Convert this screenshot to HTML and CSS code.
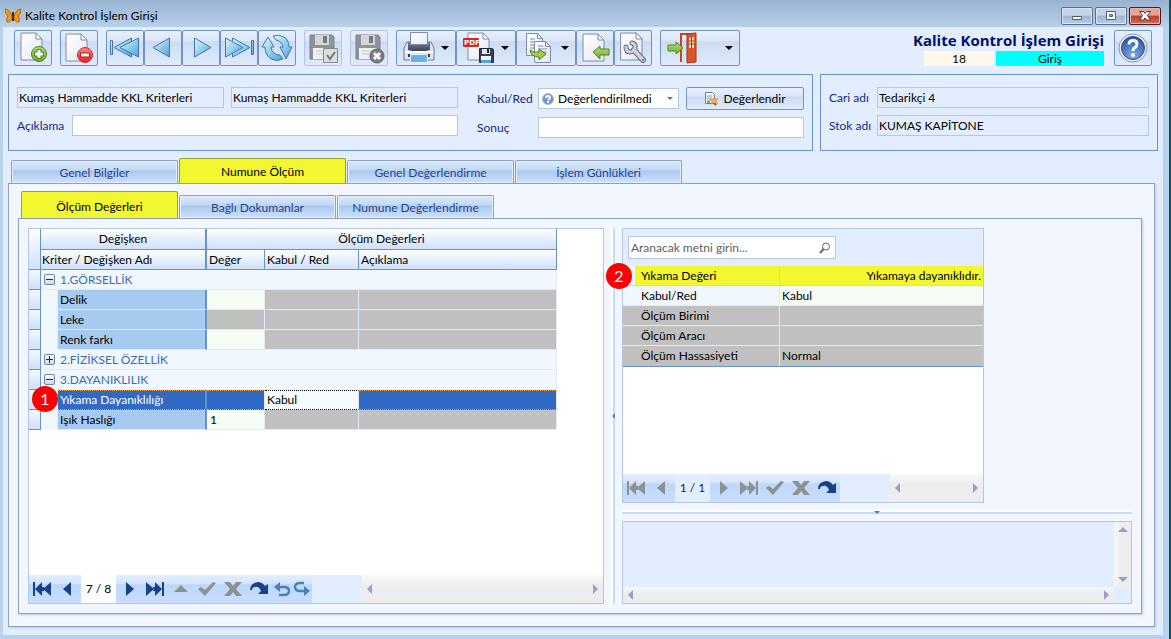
FILE: index.html
```html
<!DOCTYPE html>
<html lang="tr">
<head>
    <meta charset="UTF-8">
    <title>Kalite Kontrol İşlem Girişi</title>
    <meta name="viewport" content="width=device-width, initial-scale=1.0">
    <link rel="stylesheet" href="styles.css">
</head>
<body>

<!-- shared icon shapes -->
<svg class="defs" aria-hidden="true">
    <defs>
        <linearGradient id="blue" x1="0" y1="0" x2="1" y2="1">
            <stop offset="0" stop-color="#e4f8ff"/><stop offset="1" stop-color="#4ba3dc"/>
        </linearGradient>
        <linearGradient id="paper" x1="0" y1="0" x2="1" y2="1">
            <stop offset="0" stop-color="#ffffff"/><stop offset="1" stop-color="#e6e9f3"/>
        </linearGradient>
        <linearGradient id="green" x1="0" y1="0" x2="0" y2="1">
            <stop offset="0" stop-color="#b9e27a"/><stop offset="1" stop-color="#6fae2a"/>
        </linearGradient>
        <linearGradient id="dark" x1="0" y1="0" x2="0" y2="1">
            <stop offset="0" stop-color="#7c8599"/><stop offset="1" stop-color="#343b50"/>
        </linearGradient>
        <linearGradient id="red" x1="0" y1="0" x2="0" y2="1">
            <stop offset="0" stop-color="#ff8c84"/><stop offset="1" stop-color="#e8191f"/>
        </linearGradient>
        <radialGradient id="help" cx=".5" cy=".85" r=".8">
            <stop offset="0" stop-color="#7fb0e8"/><stop offset="1" stop-color="#2d55a8"/>
        </radialGradient>
        <symbol id="page" viewBox="0 0 24 30">
            <path d="M1 1h15l6 6v21H1z" fill="url(#paper)" stroke="#7f8aae"/>
            <path d="M16 1v6h6z" fill="#fff" stroke="#7f8aae" stroke-linejoin="round"/>
        </symbol>
        <symbol id="floppy" viewBox="0 0 26 26">
            <path d="M1 1h22l2 2v22H1z" fill="#8f9298" stroke="#7c7f85"/>
            <path d="M6 1h14v10H6z" fill="#d4d6da"/>
            <path d="M14 2h4v7h-4z" fill="#777a80"/>
            <path d="M4 14h18v11H4z" fill="#eff0f2"/>
            <path d="M7 17h12M7 20h12" stroke="#c5c7cb"/>
        </symbol>
        <symbol id="nav-first" viewBox="0 0 20 16">
            <path d="M1 1h2v14H1zM3 8l7-7v14zM11 8l8-7v14zM10 6h2v4h-2z" fill="currentColor"/>
        </symbol>
        <symbol id="nav-prev" viewBox="0 0 20 16"><path d="M5 8l8-7v14z" fill="currentColor"/></symbol>
        <symbol id="nav-next" viewBox="0 0 20 16"><path d="M15 8L7 1v14z" fill="currentColor"/></symbol>
        <symbol id="nav-last" viewBox="0 0 20 16">
            <path d="M17 1h2v14h-2zM17 8l-7-7v14zM9 8L1 1v14zM8 6h2v4H8z" fill="currentColor"/>
        </symbol>
        <symbol id="nav-edit" viewBox="0 0 20 16"><path d="M3 11l7-7 7 7z" fill="currentColor"/></symbol>
        <symbol id="nav-post" viewBox="0 0 20 16"><path d="M1 8l3-2 4 3 8-8 3 1L8 15z" fill="currentColor"/></symbol>
        <symbol id="nav-cancel" viewBox="0 0 20 16"><path d="M1 1h6l3 4 3-4h6l-6 7 6 7h-6l-3-4-3 4H1l6-7z" fill="currentColor"/></symbol>
        <symbol id="nav-refresh" viewBox="0 0 20 16">
            <path d="M1 9q0-7 8-8 4 0 7 4l3-2v10H9l3-3q-2-5-6-4-3 0-3 3z" fill="currentColor"/>
        </symbol>
        <symbol id="nav-undo" viewBox="0 0 18 16">
            <path d="M3 6h8q5 0 5 4t-5 4H6" fill="none" stroke="currentColor" stroke-width="2.4"/>
            <path d="M1 6l6-5v10z" fill="currentColor"/>
        </symbol>
        <symbol id="nav-redo" viewBox="0 0 18 16">
            <path d="M11 2H7Q2 2 2 6t5 4h8" fill="none" stroke="currentColor" stroke-width="2.4"/>
            <path d="M17 10l-6-5v10z" fill="currentColor"/>
        </symbol>
    </defs>
</svg>

<div class="window">
    <header class="titlebar">
        <svg class="logo" viewBox="0 0 16 16" aria-hidden="true">
            <path d="M7 8Q4 1 0 1q0 5 3 7-2 2-1 6 3 1 5-3z" fill="#f39a1d" stroke="#b8640c"/>
            <path d="M9 8q3-7 7-7 0 5-3 7 2 2 1 6-3 1-5-3z" fill="#f39a1d" stroke="#b8640c"/>
            <path d="M8 4v9" stroke="#4a2c0c" stroke-width="2"/>
        </svg>
        <span class="caption">Kalite Kontrol İşlem Girişi</span>
        <div class="window-buttons">
            <button class="wbtn" aria-label="Simge durumuna küçült">
                <svg viewBox="0 0 12 10"><path d="M1.500 5.500h9v3h-9z" fill="#fff" stroke="#515d75"/></svg>
            </button>
            <button class="wbtn" aria-label="Ekranı kapla">
                <svg viewBox="0 0 12 10"><path d="M1.500.5h9v8h-9z" fill="#fff" stroke="#515d75"/><path d="M4.500 3.500h3v2h-3z" fill="#9ab" stroke="#515d75"/></svg>
            </button>
            <button class="wbtn wbtn-close" aria-label="Kapat">
                <svg viewBox="0 0 12 10"><path d="M.5.5h4L6 2.500 7.500.5h4L8.500 4.500l3 4.500h-4L6 7 4.500 9h-4l3-4.500z" fill="#fff" stroke="#5a3038"/></svg>
            </button>
        </div>
    </header>

    <main class="client">
        <div class="toolbar">
            <button class="tool" aria-label="Yeni">
                <svg viewBox="0 0 32 32">
                    <use href="#page" x="3" y="0" width="24" height="30"/>
                    <circle cx="22" cy="22" r="7.500" fill="url(#green)" stroke="#4d7f1c"/>
                    <path d="M22 17v10M17 22h10" stroke="#4d7f1c" stroke-width="5"/>
                    <path d="M22 18v8M18 22h8" stroke="#fff" stroke-width="3"/>
                </svg>
            </button>
            <button class="tool" aria-label="Sil">
                <svg viewBox="0 0 32 32">
                    <use href="#page" x="2" y="1" width="24" height="30"/>
                    <circle cx="22" cy="23" r="7.500" fill="url(#red)" stroke="#c9302c"/>
                    <path d="M17 23h10" stroke="#b3191c" stroke-width="5"/>
                    <path d="M18 23h8" stroke="#fff" stroke-width="3"/>
                </svg>
            </button>
            <div class="tool-group">
                <button class="tool" aria-label="İlk kayıt">
                    <svg viewBox="0 0 32 32" fill="url(#blue)" stroke="#3b78b0" stroke-linejoin="round">
                        <path d="M1.500 8.500h2v14h-2zM5 15.500L22.500 6v19z"/><path d="M11 15.500L29.500 6v19z"/>
                    </svg>
                </button>
                <button class="tool" aria-label="Önceki kayıt">
                    <svg viewBox="0 0 32 32" fill="url(#blue)" stroke="#3b78b0" stroke-linejoin="round"><path d="M6 15.500L22.500 6v19z"/></svg>
                </button>
                <button class="tool" aria-label="Sonraki kayıt">
                    <svg viewBox="0 0 32 32" fill="url(#blue)" stroke="#3b78b0" stroke-linejoin="round"><path d="M26 15.500L9.500 6v19z"/></svg>
                </button>
                <button class="tool" aria-label="Son kayıt">
                    <svg viewBox="0 0 32 32" fill="url(#blue)" stroke="#3b78b0" stroke-linejoin="round">
                        <path d="M28.500 8.500h2v14h-2zM27 15.500L9.500 6v19z"/><path d="M20 15.500L2.500 6v19z"/>
                    </svg>
                </button>
                <button class="tool" aria-label="Yenile">
                    <svg viewBox="0 0 32 32" fill="url(#blue)" stroke="#3b78b0" stroke-linejoin="round">
                        <path d="M1 15L7 5l6 10h-3q1 8 9 8l3 4q-6 3-12 0-6-4-6-12z"/>
                        <path d="M31 15l-6 12-6-12h3q-1-6-7-7l-3-4q6-2 11 1 5 3 5 10z"/>
                    </svg>
                </button>
            </div>
            <button class="tool" disabled aria-label="Kaydet">
                <svg viewBox="0 0 32 32">
                    <use href="#floppy" x="2" y="2" width="26" height="26"/>
                    <path d="M16.500 16.500h14v14h-14z" fill="#dcdde0" stroke="#85888d"/>
                    <path d="M20 23l3 4 5-7" fill="none" stroke="#777" stroke-width="2"/>
                </svg>
            </button>
            <button class="tool" disabled aria-label="Vazgeç">
                <svg viewBox="0 0 32 32">
                    <use href="#floppy" x="2" y="2" width="26" height="26"/>
                    <circle cx="24" cy="24" r="7" fill="#7b7d82" stroke="#5e6065"/>
                    <path d="M21 21l6 6M27 21l-6 6" stroke="#fff" stroke-width="3"/>
                </svg>
            </button>
            <div class="tool-group">
                <button class="tool tool-split" aria-label="Yazdır">
                    <svg viewBox="0 0 32 32">
                        <path d="M4 10h24l3 6v12H1V16z" fill="#dfe3ee" stroke="#6f7a9a"/>
                        <path d="M5 10h22v8q-11 3-22 0z" fill="url(#dark)"/>
                        <path d="M7.500.5h17v12h-17z" fill="url(#paper)" stroke="#7f8aae"/>
                        <path d="M2 20h28" stroke="#fff" stroke-width="2"/>
                        <path d="M5 22h22v3H5z" fill="#343b50"/>
                        <path d="M7.500 22.500h17v8h-17z" fill="#65b2ea" stroke="#e9f4fc"/>
                    </svg>
                    <svg class="caret" viewBox="0 0 8 4"><path d="M0 0h8L4 4z"/></svg>
                </button>
                <button class="tool tool-split" aria-label="PDF kaydet">
                    <svg viewBox="0 0 32 32">
                        <use href="#page" x="4" y="0" width="24" height="30"/>
                        <rect x="0" y="6" width="16" height="9" rx="1" fill="#d42a22"/>
                        <text x="1" y="13" class="pdf-text">PDF</text>
                        <path d="M16.500 16.500h13l1 1v13h-14z" fill="#3a4358" stroke="#232a3d"/>
                        <path d="M19 17h8v5h-8z" fill="#e4e8f0"/><path d="M24 17h2v4h-2z" fill="#232a3d"/>
                        <path d="M18 24h10v7H18z" fill="#eef3f8"/><path d="M18 28h10v3H18z" fill="#52a4dd"/>
                    </svg>
                    <svg class="caret" viewBox="0 0 8 4"><path d="M0 0h8L4 4z"/></svg>
                </button>
                <button class="tool tool-split" aria-label="Kopyala">
                    <svg viewBox="0 0 32 32">
                        <path d="M3.500 1.500h11l5 5v17h-16z" fill="url(#paper)" stroke="#7f8aae"/>
                        <path d="M14.500 1.500v5h5M7 7h5M7 10h8M7 13h8M7 16h8" fill="none" stroke="#7f8aae"/>
                        <path d="M11.500 9.500h11l5 5v16h-16z" fill="url(#paper)" stroke="#7f8aae"/>
                        <path d="M22.500 9.500v5h5M15 14h5M15 17h9M15 20h9" fill="none" stroke="#7f8aae"/>
                        <path d="M7 18q3 3 9 2v-3l7 5-7 6v-3q-8 0-9-7z" fill="#9ccf45" stroke="#56801f"/>
                    </svg>
                    <svg class="caret" viewBox="0 0 8 4"><path d="M0 0h8L4 4z"/></svg>
                </button>
                <button class="tool" aria-label="İçe aktar">
                    <svg viewBox="0 0 32 32">
                        <use href="#page" x="3" y="1" width="24" height="30"/>
                        <path d="M14 20l7-6v3h9v6h-9v4z" fill="url(#green)" stroke="#56801f"/>
                    </svg>
                </button>
                <button class="tool" aria-label="Ayarlar">
                    <svg viewBox="0 0 32 32" fill="none" stroke-linecap="round">
                        <use href="#page" x="3" y="0" width="24" height="30"/>
                        <path d="M17 18l9 10" stroke="#666e85" stroke-width="6"/>
                        <path d="M9 15q0 5 4 5t5-4-3-5" stroke="#666e85" stroke-width="5"/>
                        <path d="M17 18l9 10" stroke="#ccd1dc" stroke-width="4"/>
                        <path d="M9 15q0 5 4 5t5-4-3-5" stroke="#ccd1dc" stroke-width="3"/>
                        <circle cx="26" cy="28" r="1" fill="#666e85"/>
                    </svg>
                </button>
            </div>
            <button class="tool tool-split tool-exit" aria-label="Çıkış">
                <svg viewBox="0 0 32 32">
                    <path d="M14 30V2h10" fill="none" stroke="#c9451e" stroke-width="2"/>
                    <path d="M20 2l9-1v29l-9 1z" fill="#d9562a" stroke="#a93713"/>
                    <path d="M22 6l5-1v11h-5z" fill="#f6e3c0"/>
                    <path d="M24.500 5v11M22 9h5M22 12h5" stroke="#a93713"/>
                    <path d="M1 13h8v-3l7 6-7 6v-3H1z" fill="url(#green)" stroke="#56801f"/>
                </svg>
                <svg class="caret" viewBox="0 0 8 4"><path d="M0 0h8L4 4z"/></svg>
            </button>

            <div class="form-title">
                <h1>Kalite Kontrol İşlem Girişi</h1>
                <div class="form-status">
                    <span class="record-no">18</span>
                    <span class="record-type">Giriş</span>
                </div>
            </div>
            <button class="tool" aria-label="Yardım">
                <svg viewBox="0 0 32 32">
                    <circle cx="16" cy="16" r="14" fill="#eef3fa" stroke="#8792ad"/>
                    <circle cx="16" cy="16" r="11.500" fill="url(#help)" stroke="#2b4a8c"/>
                    <path d="M12 12.500q0-4 4-4t4 3.500q0 2-2 3.500-2 1-2 3.500" fill="none" stroke="#fff" stroke-width="3"/>
                    <circle cx="16" cy="23" r="2" fill="#fff"/>
                </svg>
            </button>
        </div>

        <div class="panels">
            <section class="panel panel-main">
                <div class="criteria">
                    <div class="field-row">
                        <input class="field readonly criterion" type="text" aria-label="Kriter kodu" value="Kumaş Hammadde KKL Kriterleri" readonly>
                        <input class="field readonly" type="text" aria-label="Kriter adı" value="Kumaş Hammadde KKL Kriterleri" readonly>
                    </div>
                    <div class="field-row">
                        <label class="label-wide" for="aciklama">Açıklama</label>
                        <input class="field" type="text" id="aciklama">
                    </div>
                </div>
                <div class="result">
                    <div class="field-row">
                        <label class="label-result" for="kabul">Kabul/Red</label>
                        <div class="combo">
                            <svg class="combo-icon" viewBox="0 0 12 12">
                                <circle cx="6" cy="6" r="5.500" fill="#6f97cf" stroke="#a9b8cf"/>
                                <path d="M4 5q0-2 2-2t2 2L6 7M6 8v2" fill="none" stroke="#fff" stroke-width="2"/>
                            </svg>
                            <select id="kabul">
                                <option>Değerlendirilmedi</option>
                                <option>Kabul</option>
                                <option>Red</option>
                            </select>
                            <svg class="combo-caret" viewBox="0 0 6 3"><path d="M0 0h6L3 3z" fill="#5577aa"/></svg>
                        </div>
                        <button class="action">
                            <svg viewBox="0 0 14 14">
                                <path d="M1.500.5h7l2 2v9h-9z" fill="#fff" stroke="#6b7ba8"/>
                                <path d="M3 4h5M3 6h5M3 8h4" stroke="#8796bd"/>
                                <path d="M3 9h3v2H3z" fill="#74b43a"/>
                                <path d="M9 10l3 3" stroke="#555b70" stroke-width="2"/>
                                <path d="M10 5l1 2 3 0-2 2 1 3-3-1-3 1 1-3-2-2h3z" fill="#fbb52c" stroke="#c47a12" stroke-width=".5"/>
                            </svg>
                            Değerlendir
                        </button>
                    </div>
                    <div class="field-row">
                        <label class="label-result" for="sonuc">Sonuç</label>
                        <input class="field" type="text" id="sonuc">
                    </div>
                </div>
            </section>
            <section class="panel">
                <div class="field-row">
                    <label class="label-account" for="cari">Cari adı</label>
                    <input class="field readonly" type="text" id="cari" value="Tedarikçi 4" readonly>
                </div>
                <div class="field-row">
                    <label class="label-account" for="stok">Stok adı</label>
                    <input class="field readonly" type="text" id="stok" value="KUMAŞ KAPİTONE" readonly>
                </div>
            </section>
        </div>

        <nav class="tabs">
            <button class="tab">Genel Bilgiler</button>
            <button class="tab active">Numune Ölçüm</button>
            <button class="tab">Genel Değerlendirme</button>
            <button class="tab">İşlem Günlükleri</button>
        </nav>
        <div class="tab-page">
            <nav class="tabs subtabs">
                <button class="tab active">Ölçüm Değerleri</button>
                <button class="tab">Bağlı Dokumanlar</button>
                <button class="tab">Numune Değerlendirme</button>
            </nav>
            <div class="tab-page split">

                <section class="box measure">
                    <div class="box-body">
                        <table class="grid">
                            <colgroup>
                                <col class="c-gutter"><col class="c-tree"><col class="c-name">
                                <col class="c-value"><col class="c-accept"><col class="c-note">
                            </colgroup>
                            <thead>
                                <tr class="bands">
                                    <th class="gutter" rowspan="2"></th>
                                    <th class="band-end" colspan="2">Değişken</th>
                                    <th colspan="3">Ölçüm Değerleri</th>
                                </tr>
                                <tr class="heads">
                                    <th class="band-end" colspan="2">Kriter / Değişken Adı</th>
                                    <th>Değer</th>
                                    <th>Kabul / Red</th>
                                    <th>Açıklama</th>
                                </tr>
                            </thead>
                            <tbody>
                                <tr class="group">
                                    <td class="gutter"></td>
                                    <td colspan="5"><div class="group-cell"><button class="toggle" aria-label="Daralt"><svg viewBox="0 0 7 7"><path d="M0 3.500h7" stroke="#222c44"/></svg></button>1.GÖRSELLİK</div></td>
                                </tr>
                                <tr>
                                    <td class="gutter"></td><td class="tree"></td><td class="name">Delik</td>
                                    <td class="open"></td><td class="locked"></td><td class="locked"></td>
                                </tr>
                                <tr>
                                    <td class="gutter"></td><td class="tree"></td><td class="name">Leke</td>
                                    <td class="locked"></td><td class="locked"></td><td class="locked"></td>
                                </tr>
                                <tr>
                                    <td class="gutter"></td><td class="tree"></td><td class="name">Renk farkı</td>
                                    <td class="open"></td><td class="locked"></td><td class="locked"></td>
                                </tr>
                                <tr class="group">
                                    <td class="gutter"></td>
                                    <td colspan="5"><div class="group-cell"><button class="toggle" aria-label="Genişlet"><svg viewBox="0 0 7 7"><path d="M0 3.500h7M3.500 0v7" stroke="#222c44"/></svg></button>2.FİZİKSEL ÖZELLİK</div></td>
                                </tr>
                                <tr class="group">
                                    <td class="gutter"></td>
                                    <td colspan="5"><div class="group-cell"><button class="toggle" aria-label="Daralt"><svg viewBox="0 0 7 7"><path d="M0 3.500h7" stroke="#222c44"/></svg></button>3.DAYANIKLILIK</div></td>
                                </tr>
                                <tr class="selected">
                                    <td class="gutter"><span class="badge badge-row">1</span></td><td class="tree"></td><td class="name">Yıkama Dayanıklılığı</td>
                                    <td></td><td class="focused">Kabul</td><td></td>
                                </tr>
                                <tr>
                                    <td class="gutter"></td><td class="tree"></td><td class="name">Işık Haslığı</td>
                                    <td class="open">1</td><td class="locked"></td><td class="locked"></td>
                                </tr>
                            </tbody>
                        </table>
                    </div>
                    <div class="navigator">
                        <div class="nav-buttons">
                            <button aria-label="İlk"><svg><use href="#nav-first"/></svg></button>
                            <button aria-label="Önceki"><svg><use href="#nav-prev"/></svg></button>
                            <span class="nav-pos">7 / 8</span>
                            <button aria-label="Sonraki"><svg><use href="#nav-next"/></svg></button>
                            <button aria-label="Son"><svg><use href="#nav-last"/></svg></button>
                            <button aria-label="Düzenle" disabled><svg><use href="#nav-edit"/></svg></button>
                            <button aria-label="Onayla" disabled><svg><use href="#nav-post"/></svg></button>
                            <button aria-label="İptal" disabled><svg><use href="#nav-cancel"/></svg></button>
                            <button aria-label="Yenile"><svg><use href="#nav-refresh"/></svg></button>
                            <button class="nav-small" aria-label="Geri al"><svg><use href="#nav-undo"/></svg></button>
                            <button class="nav-small" aria-label="İleri al"><svg><use href="#nav-redo"/></svg></button>
                        </div>
                        <div class="hscroll">
                            <button aria-label="Sola kaydır"><svg viewBox="0 0 5 10"><path d="M5 0v10L0 5z"/></svg></button>
                            <button aria-label="Sağa kaydır"><svg viewBox="0 0 5 10"><path d="M0 0v10l5-5z"/></svg></button>
                        </div>
                    </div>
                </section>

                <div class="splitter vertical"><svg viewBox="0 0 3 6"><path d="M3 0v6L0 3z" fill="#4d7fc0"/></svg></div>

                <div class="details">
                    <section class="box properties">
                        <div class="search-bar">
                            <div class="search">
                                <input type="search" placeholder="Aranacak metni girin..." aria-label="Ara">
                                <svg viewBox="0 0 12 12"><circle cx="7" cy="4.500" r="3.500" fill="none" stroke="#666"/><path d="M4.500 7L1 11" stroke="#666" stroke-width="2"/></svg>
                            </div>
                        </div>
                        <div class="box-body">
                            <table class="props">
                                <tr class="marked"><th scope="row"><span class="badge badge-prop">2</span>Yıkama Değeri</th><td>Yıkamaya dayanıklıdır.</td></tr>
                                <tr class="editable"><th scope="row">Kabul/Red</th><td>Kabul</td></tr>
                                <tr><th scope="row">Ölçüm Birimi</th><td></td></tr>
                                <tr><th scope="row">Ölçüm Aracı</th><td></td></tr>
                                <tr><th scope="row">Ölçüm Hassasiyeti</th><td>Normal</td></tr>
                            </table>
                        </div>
                        <div class="navigator">
                            <div class="nav-buttons">
                                <button aria-label="İlk" disabled><svg><use href="#nav-first"/></svg></button>
                                <button aria-label="Önceki" disabled><svg><use href="#nav-prev"/></svg></button>
                                <span class="nav-pos nav-pos-plain">1 / 1</span>
                                <button aria-label="Sonraki" disabled><svg><use href="#nav-next"/></svg></button>
                                <button aria-label="Son" disabled><svg><use href="#nav-last"/></svg></button>
                                <button aria-label="Onayla" disabled><svg><use href="#nav-post"/></svg></button>
                                <button aria-label="İptal" disabled><svg><use href="#nav-cancel"/></svg></button>
                                <button aria-label="Yenile"><svg><use href="#nav-refresh"/></svg></button>
                            </div>
                            <div class="hscroll">
                                <button aria-label="Sola kaydır"><svg viewBox="0 0 5 10"><path d="M5 0v10L0 5z"/></svg></button>
                                <button aria-label="Sağa kaydır"><svg viewBox="0 0 5 10"><path d="M0 0v10l5-5z"/></svg></button>
                            </div>
                        </div>
                    </section>

                    <div class="splitter horizontal"><svg viewBox="0 0 6 3"><path d="M0 0h6L3 3z" fill="#4d7fc0"/></svg></div>

                    <section class="box memo">
                        <div class="memo-text"></div>
                        <div class="vscroll">
                            <button aria-label="Yukarı kaydır"><svg viewBox="0 0 10 5"><path d="M0 5h10L5 0z"/></svg></button>
                            <button aria-label="Aşağı kaydır"><svg viewBox="0 0 10 5"><path d="M0 0h10L5 5z"/></svg></button>
                        </div>
                        <div class="hscroll">
                            <button aria-label="Sola kaydır"><svg viewBox="0 0 5 10"><path d="M5 0v10L0 5z"/></svg></button>
                            <button aria-label="Sağa kaydır"><svg viewBox="0 0 5 10"><path d="M0 0v10l5-5z"/></svg></button>
                        </div>
                    </section>
                </div>
            </div>
        </div>
    </main>
</div>

</body>
</html>
```
FILE: styles.css
```css
* {
    box-sizing: border-box;
}

body {
    margin: 0;
    font-family: Lato, "Open Sans", sans-serif;
    font-size: 12px;
    line-height: 16px;
    color: #000;
}

button, input, select {
    font: inherit;
    color: inherit;
    margin: 0;
}

button {
    padding: 0;
}

svg {
    display: block;
    flex: none;
}

.defs {
    position: absolute;
    width: 0;
    height: 0;
}

/* window frame */
.window {
    display: flex;
    flex-direction: column;
    min-height: 100vh;
    padding: 0 6px 4px 3px;
    background: #b9d1ea;
    border-right: 2px solid #1c4f5e;
}

.titlebar {
    display: flex;
    align-items: center;
    height: 27px;
    margin: 0 -6px 0 -3px;
    padding: 4px 8px 0 5px;
    background: linear-gradient(#99b3d1, #b9d0ea);
}

.logo {
    width: 16px;
    height: 16px;
}

.caption {
    margin-left: 4px;
    flex: 1;
}

.window-buttons {
    display: flex;
    gap: 2px;
}

.wbtn {
    display: grid;
    place-items: center;
    width: 32px;
    height: 18px;
    border: 1px solid #5d6f8c;
    border-radius: 2px;
    background: linear-gradient(#c3d4e8 45%, #9fb6d2 50%, #b7cde6);
    box-shadow: inset 0 0 0 1px #dce8f5;
}

.wbtn svg {
    width: 12px;
    height: 10px;
}

.wbtn-close {
    border-color: #4d1a1e;
    background: linear-gradient(#e3a396 45%, #bb3e28 50%, #d0705c);
    box-shadow: inset 0 0 0 1px #e8b5aa;
}

.client {
    display: flex;
    flex-direction: column;
    flex: 1;
    padding: 3px 5px 8px;
    background: #e2eeff;
}

/* toolbar */
.toolbar {
    display: flex;
    gap: 8px;
    padding: 0 6px;
}

.tool-group {
    display: flex;
}

.tool {
    display: flex;
    align-items: center;
    justify-content: center;
    width: 38px;
    height: 36px;
    border: 1px solid #7292c0;
    border-radius: 2px;
    background: linear-gradient(#e6effc, #dbe7f8 30%, #cbdcf3 31%, #e0ebfb);
}

.tool svg {
    width: 32px;
    height: 32px;
}

.tool:disabled {
    border-color: #b3c5e0;
}

.tool-split {
    width: 60px;
    justify-content: space-between;
    padding: 0 6px;
}

.tool .caret {
    width: 8px;
    height: 4px;
}

.tool-exit {
    width: 80px;
}

.pdf-text {
    font: bold 7px "DejaVu Sans", sans-serif;
    fill: #fff;
}

.form-title {
    margin-left: auto;
    margin-right: 2px;
}

.form-title h1 {
    margin: 0;
    font-family: "Open Sans", sans-serif;
    font-size: 15px;
    line-height: 21px;
    color: #00106e;
}

.form-status {
    display: flex;
    justify-content: flex-end;
    gap: 2px;
    line-height: 15px;
    text-align: center;
}

.record-no {
    width: 70px;
    background: #fff9ec;
}

.record-type {
    width: 108px;
    background: #00ffff;
}

/* header panels */
.panels {
    display: grid;
    grid-template-columns: 805fr 338fr;
    gap: 7px;
    margin-top: 8px;
}

.panel {
    height: 77px;
    padding: 12px 8px;
    border: 1px solid #6593cf;
}

.panel-main {
    display: grid;
    grid-template-columns: 441fr 327fr;
    gap: 19px;
}

.field-row {
    display: flex;
    align-items: center;
    gap: 7px;
    margin-bottom: 7px;
}

.field-row label {
    flex: none;
    color: #15287f;
    white-space: nowrap;
}

.label-wide {
    width: 48px;
}

.label-result {
    width: 54px;
}

.label-account {
    width: 41px;
}

.field {
    flex: 1;
    min-width: 0;
    height: 21px;
    padding: 0 1px;
    border: 1px solid #b3c7e2;
    background: #fff;
}

.readonly {
    background: #e2eeff;
}

.criterion {
    flex: 0 1 207px;
}

.combo {
    display: flex;
    align-items: center;
    flex: 1;
    height: 21px;
    padding: 0 5px 0 3px;
    border: 1px solid #b3c7e2;
    background: #fff;
}

.combo-icon {
    width: 12px;
    height: 12px;
}

.combo select {
    flex: 1;
    min-width: 0;
    padding: 0 0 0 4px;
    border: 0;
    appearance: none;
    background: none;
}

.combo-caret {
    width: 6px;
    height: 3px;
}

.action {
    display: flex;
    align-items: center;
    justify-content: center;
    gap: 5px;
    width: 118px;
    height: 23px;
    border: 1px solid #7292c0;
    border-radius: 2px;
    background: linear-gradient(#e6effc, #dbe7f8 40%, #cbdcf3 41%, #e0ebfb);
}

.action svg {
    width: 14px;
    height: 14px;
}

/* tabs */
.tabs {
    display: flex;
    align-items: flex-end;
    gap: 1px;
    height: 25px;
    margin: 7px 0 0 3px;
}

.tab {
    width: 167px;
    height: 23px;
    padding-top: 2px;
    border: 1px solid #8ba0c8;
    border-bottom: 0;
    border-radius: 2px 2px 0 0;
    background: linear-gradient(#dce9fb, #c4d9f5 40%, #abc8ee 45%, #cfe1f9);
    box-shadow: inset 0 0 0 1px #e6f0fd;
    color: #1f4391;
}

.tab.active {
    height: 25px;
    border-color: #97a32c;
    background: #f3f72f;
    box-shadow: none;
    color: #000;
}

.tab-page {
    display: flex;
    flex-direction: column;
    flex: 1;
    margin-right: 3px;
    padding: 0 12px 12px 9px;
    border: 1px solid #8ba0c8;
    background: #f2f7ff;
    box-shadow: 1px 1px 2px #b9cbe8;
}

.subtabs {
    height: 27px;
}

.subtabs .tab {
    width: 157px;
}

.subtabs .active {
    height: 27px;
    padding-top: 4px;
}

.split {
    display: grid;
    grid-template-columns: 576fr 4px 510fr;
    gap: 7px;
    margin-right: 0;
    padding: 9px;
}

.splitter {
    display: grid;
    place-items: center;
}

.splitter.vertical {
    background: linear-gradient(90deg, #fff 50%, #c5dcfb 50%);
}

.splitter.vertical svg {
    width: 3px;
    height: 6px;
}

.splitter.horizontal {
    height: 4px;
    background: linear-gradient(#fff 50%, #c5dcfb 50%);
}

.splitter.horizontal svg {
    width: 6px;
    height: 3px;
}

.box {
    display: flex;
    flex-direction: column;
    min-width: 0;
    border: 1px solid #b3c7e2;
    background: #fff;
}

.box-body {
    flex: 1;
}

/* measurement grid */
.grid {
    width: 528px;
    table-layout: fixed;
    border-collapse: separate;
    border-spacing: 0;
}

.c-gutter {
    width: 12px;
}

.c-tree {
    width: 17px;
}

.c-name {
    width: 149px;
}

.c-value {
    width: 58px;
}

.c-accept {
    width: 94px;
}

.grid th, .grid td {
    height: 20px;
    padding: 0 2px;
    line-height: 16px;
    white-space: nowrap;
    text-align: left;
    font-weight: normal;
}

.grid th {
    border-right: 1px solid #6593cf;
    border-bottom: 1px solid #6593cf;
    background: linear-gradient(#fff, #cfe1fc);
}

.grid .bands th {
    height: 21px;
    text-align: center;
}

.grid .heads .band-end {
    padding: 0 1px;
}

.grid .band-end {
    border-right: 2px solid #6593cf;
}

.grid td {
    border-right: 1px solid #dfeafb;
    border-bottom: 1px solid #dfeafb;
}

.grid td.gutter {
    position: relative;
    border-right: 1px solid #6593cf;
    border-bottom: 1px solid #6593cf;
    background: linear-gradient(#f4f8ff, #cfe1fc);
}

.grid td.tree {
    border-bottom-color: #f0f7ff;
    background: #f0f7ff;
}

.grid td.name {
    border-right: 2px solid #6593cf;
    background: #a6caf0;
}

.grid .open {
    padding: 0 3px;
    background: #f5fdf4;
}

.grid .locked {
    background: #c0c0c0;
}

.grid .group td {
    background-color: #f0f7ff;
    color: #3f6cae;
}

.group-cell {
    display: flex;
    align-items: center;
    gap: 5px;
}

.toggle {
    display: grid;
    place-items: center;
    width: 11px;
    height: 11px;
    margin-left: 1px;
    border: 1px solid #6f83a8;
    border-radius: 2px;
    background: linear-gradient(#fff, #cdd9ec);
}

.toggle svg {
    width: 7px;
    height: 7px;
}

.grid .selected td:not(.gutter):not(.tree) {
    border-top: 1px dotted #e0a050;
    border-bottom: 1px dotted #e0a050;
    background: #316ac5;
    color: #fff;
}

.grid .selected td.focused:not(.gutter):not(.tree) {
    border-color: #000;
    border-right-color: #dfeafb;
    background: #f5fbff;
    color: #000;
}

.badge {
    position: absolute;
    z-index: 1;
    width: 26px;
    height: 26px;
    border-radius: 50%;
    background: #f00;
    color: #fff;
    font-size: 16px;
    line-height: 26px;
    text-align: center;
}

.badge-row {
    left: 3px;
    top: -4px;
}

.badge-prop {
    left: -17px;
    top: -3px;
}

/* record navigator */
.navigator {
    display: flex;
    gap: 50px;
    height: 28px;
    background: #e2eeff;
}

.nav-buttons {
    display: flex;
    background: linear-gradient(#e2eeff, #d5e6fe 30%, #bdd7fb 35%, #c9defd);
    color: #17428b;
}

.nav-buttons button {
    display: grid;
    place-items: center;
    width: 26px;
    border: 0;
    background: none;
}

.nav-buttons button:disabled {
    color: #8f9091;
}

.nav-buttons svg {
    width: 20px;
    height: 16px;
}

.nav-buttons .nav-small {
    width: 20px;
    color: #4682b4;
}

.nav-small svg {
    width: 18px;
}

.nav-pos {
    width: 35px;
    background: #fff;
    color: #000;
    line-height: 28px;
    text-align: center;
}

.nav-pos-plain {
    background: #e2eeff;
    color: #15136f;
}

.hscroll, .vscroll {
    display: flex;
    justify-content: space-between;
}

.hscroll {
    flex: 1;
    padding: 0 5px;
    background: linear-gradient(#f8f8f8, #ededed 40%);
}

.vscroll {
    flex-direction: column;
    padding: 5px 0;
    background: linear-gradient(90deg, #f8f8f8, #ededed 40%);
}

.hscroll button, .vscroll button {
    display: grid;
    place-items: center;
    border: 0;
    background: none;
}

.hscroll svg {
    width: 5px;
    height: 10px;
    fill: #93a3c8;
}

.vscroll svg {
    width: 10px;
    height: 5px;
    fill: #93a3c8;
}

/* details side */
.details {
    display: grid;
    grid-template-rows: 1fr auto 83px;
    gap: 7px;
    min-width: 0;
}

.properties {
    width: 71%;
}

.search-bar {
    padding: 7px 5px;
    background: #e2eeff;
}

.search {
    display: flex;
    align-items: center;
    width: 208px;
    height: 23px;
    padding: 0 4px 0 2px;
    border: 1px solid #b3c7e2;
    background: #fff;
}

.search input {
    flex: 1;
    min-width: 0;
    padding: 0;
    border: 0;
    background: none;
}

.search input::placeholder {
    color: #606060;
}

.search svg {
    width: 12px;
    height: 12px;
}

.props {
    width: 100%;
    table-layout: fixed;
    border-collapse: separate;
    border-spacing: 0;
    border-bottom: 1px solid #6593cf;
}

.props th, .props td {
    height: 20px;
    padding: 0 2px;
    border-bottom: 1px solid #dfeafb;
    background: #c0c0c0;
    font-weight: normal;
    line-height: 16px;
    text-align: left;
    white-space: nowrap;
}

.props th {
    position: relative;
    width: 157px;
    padding-left: 18px;
    border-right: 1px solid #dfeafb;
}

.props tr:last-child > * {
    border-bottom: 0;
}

.props .marked th {
    border-color: #e6ea2c;
    background: linear-gradient(90deg, #f0f7ff 12px, #f3f72f 12px);
}

.props .marked td {
    border-color: #e6ea2c;
    background: #f3f72f;
    text-align: right;
}

.props .editable th {
    background: #f0f7ff;
}

.props .editable td {
    background: #f5fdf4;
}

.memo {
    display: grid;
    grid-template-columns: 1fr 17px;
    grid-template-rows: 1fr 16px;
    background: #e2eeff;
}
```
